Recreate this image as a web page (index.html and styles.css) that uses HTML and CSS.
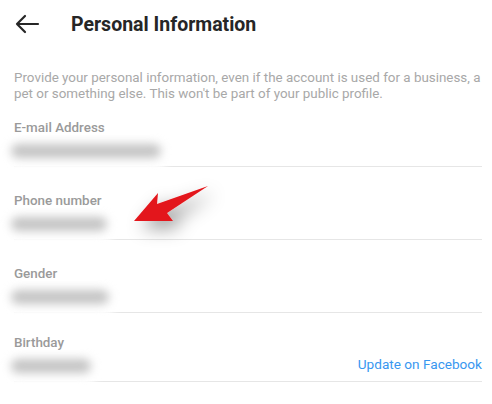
FILE: index.html
```html
<!DOCTYPE html>
<html lang="en">
<head>
    <meta charset="UTF-8">
    <meta name="viewport" content="width=device-width, initial-scale=1.0">
    <title>Personal Information</title>
    <link rel="stylesheet" href="styles.css">
</head>
<body>
    <div class="pantalla">
        <div class="cabecera">
            <svg class="atras" width="26" height="20" viewBox="0 0 26 20">
                <path d="M24 10H3M11 2L3 10l8 8" fill="none" stroke="#262626" stroke-width="2.2" stroke-linecap="round" stroke-linejoin="round"/>
            </svg>
            <h1>Personal Information</h1>
        </div>
        <p class="descripcion">Provide your personal information, even if the account is used for a business, a pet or something else. This won't be part of your public profile.</p>

        <div class="campo primero">
            <div class="etiqueta">E-mail Address</div>
            <div class="valor"><span class="borroso" style="width: 150px;"></span></div>
        </div>
        <div class="campo">
            <div class="etiqueta">Phone number</div>
            <div class="valor"><span class="borroso" style="width: 96px;"></span></div>
        </div>
        <div class="campo">
            <div class="etiqueta">Gender</div>
            <div class="valor"><span class="borroso" style="width: 98px;"></span></div>
        </div>
        <div class="campo ultimo">
            <div class="etiqueta">Birthday</div>
            <div class="valor"><span class="borroso" style="width: 80px;"></span><a class="enlace">Update on Facebook</a></div>
        </div>

        <svg class="flecha" width="492" height="404" viewBox="0 0 492 404">
            <defs>
                <filter id="sombra" x="-80%" y="-80%" width="260%" height="260%">
                    <feDropShadow dx="7" dy="7" stdDeviation="9" flood-color="#000" flood-opacity="0.4"/>
                </filter>
            </defs>
            <polygon points="134,221 158,193 157,204 208,186 167,213 173,221" fill="#e3161b" filter="url(#sombra)"/>
        </svg>
    </div>
</body>
</html>
```

FILE: styles.css
```css
body {
    margin: 0;
    font-family: 'Roboto', sans-serif;
    background: #fff;
}

.pantalla {
    position: relative;
    width: 492px;
    height: 404px;
    overflow: hidden;
    padding: 0 8px 0 14px;
    box-sizing: border-box;
}

.cabecera {
    display: flex;
    align-items: center;
    height: 48px;
}

h1 {
    margin: 0 0 0 31px;
    font-size: 19.5px;
    font-weight: 700;
    color: #262626;
}

.descripcion {
    margin: 22px 0 0;
    font-size: 13.4px;
    line-height: 16px;
    color: #a8a8a8;
}

.campo {
    position: relative;
    border-bottom: 1px solid #e6e6e6;
    margin-right: 2px;
    padding-top: 26px;
}

.campo.primero {
    padding-top: 18px;
}

.campo.ultimo {
    padding-top: 22px;
}

.etiqueta {
    font-size: 13.4px;
    font-weight: 500;
    color: #9a9a9a;
    line-height: 16px;
}

.valor {
    display: flex;
    justify-content: space-between;
    align-items: flex-end;
    height: 30px;
}

.borroso {
    display: block;
    height: 14px;
    margin: 8px 0 0 -3px;
    align-self: flex-start;
    background: #c4c4c4;
    border-radius: 8px;
    filter: blur(5px);
    box-shadow: 0 8px 0 6px #fff;
}

.enlace {
    font-size: 13.6px;
    line-height: 16px;
    color: #3897f0;
    margin-bottom: 9px;
}

.flecha {
    position: absolute;
    left: 0;
    top: 0;
}
```
